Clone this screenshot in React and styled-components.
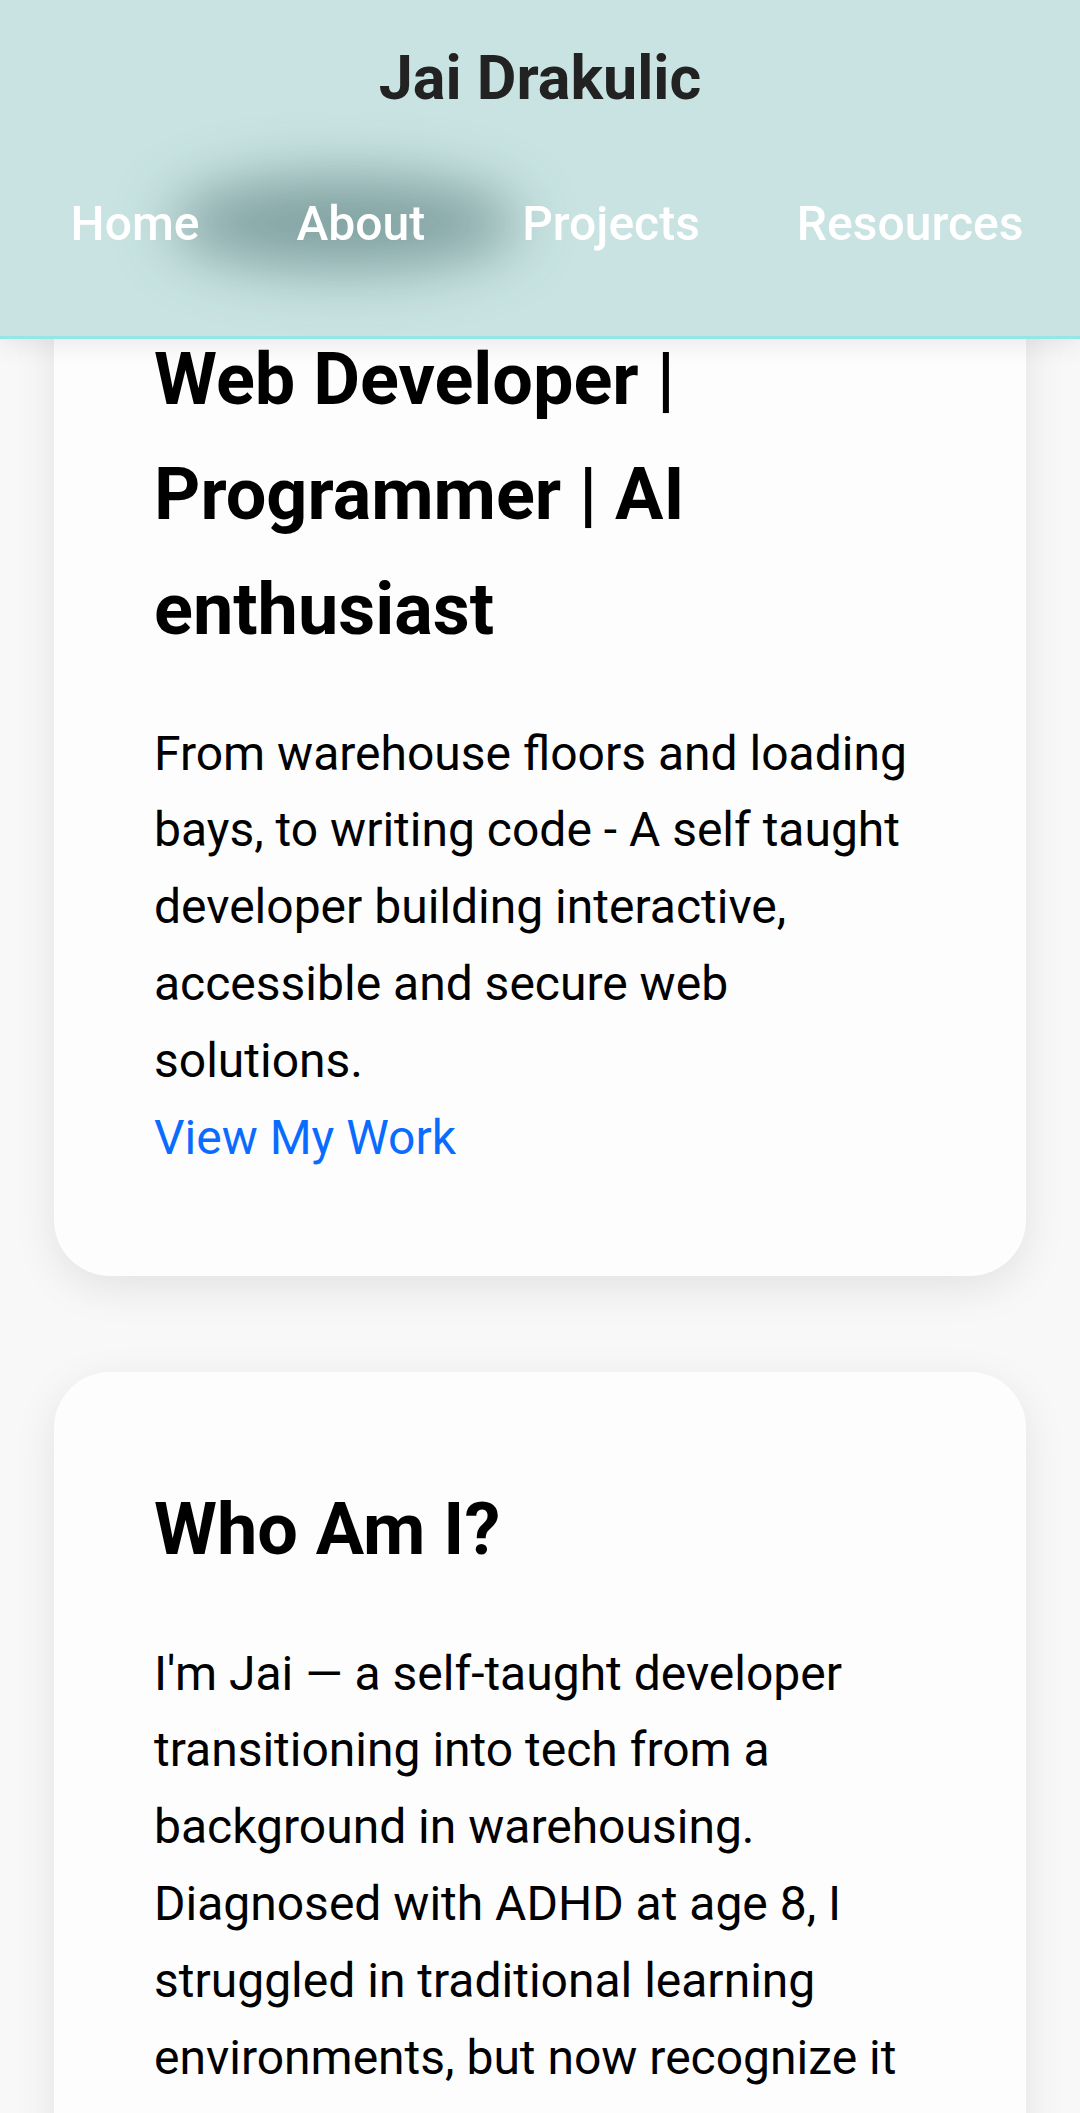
import React from "react"
import styled, { createGlobalStyle } from "styled-components"

const Global = createGlobalStyle`
body{
  margin:0;
  background:#f8f8f8;
  font-family: Roboto, "Noto Sans", Arial, sans-serif;
  color:#000;
}
*{
  box-sizing:border-box;
}
`

const Header = styled.header`
position: fixed;
top:0;
left:0;
right:0;
z-index: 10;
height:339px;
background:#c8e3e2;
border-bottom: 3px solid #93e8e6;
box-shadow: 0 6px 24px rgba(0,0,0,0.08);
display:flex;
flex-direction: column;
align-items: center;
padding-top: 42px;
`
const Brand = styled.h1`
margin:0;
font-size:61px;
line-height:1.2;
font-weight:700;
color:#222;
`
const Nav = styled.nav`
position: relative;
margin-top: 80px;
width:100%;
padding-left:14px;
display:flex;
justify-content: center;
gap: 97px;
`
const Glow = styled.div`
position:absolute;
left:170px;
top:-18px;
width:350px;
height:92px;
border-radius:50%;
background: rgba(20,60,60,0.4);
filter: blur(30px);
`
const NavLink = styled.a`
position: relative;
z-index:1;
font-size:48px;
line-height:1.2;
font-weight:500;
color:#fff;
text-decoration:none;
`

const Main = styled.main`
padding: 222px 54px 80px;
display:flex;
flex-direction: column;
gap:96px;
`
const Card = styled.section`
background:#fdfdfd;
border-radius:56px;
padding:100px;
box-shadow: 0 12px 44px rgba(0,0,0,0.09);
h2{
  margin:0 0 48px;
  font-size:72px;
  line-height:1.6;
  font-weight:700;
}
p{
  margin:0;
  font-size:48px;
  line-height:1.6;
}
`
const WorkLink = styled.a`
display:block;
font-size:48px;
line-height:1.6;
color:#0a6cff;
text-decoration:none;
`

export default function App() {
    const links = ["Home", "About", "Projects", "Resources"]
    return <>
        <Global />
        <Header>
            <Brand>Jai Drakulic</Brand>
            <Nav>
                <Glow />
                {
                    links.map(l => {
                        return <NavLink key={l} href={"#" + l.toLowerCase()}>{l}</NavLink>
                    })
                }
            </Nav>
        </Header>
        <Main>
            <Card>
                <h2>Web Developer | Programmer | AI enthusiast</h2>
                <p>From warehouse floors and loading bays, to writing code - A self taught developer building interactive, accessible and secure web solutions.</p>
                <WorkLink href="#projects">View My Work</WorkLink>
            </Card>
            <Card>
                <h2>Who Am I?</h2>
                <p>I'm Jai — a self-taught developer transitioning into tech from a background in warehousing. Diagnosed with ADHD at age 8, I struggled in traditional learning environments, but now recognize it as a strength that fuels my curiosity and drive to build things.</p>
            </Card>
        </Main>
    </>
}
